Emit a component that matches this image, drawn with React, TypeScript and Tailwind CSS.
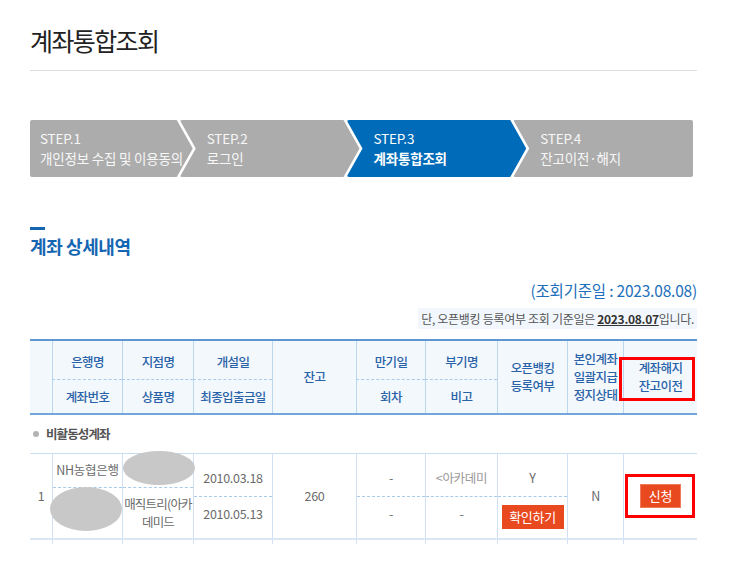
import React from 'react';

const FONT = "font-['Noto_Sans_CJK_KR','Noto_Sans',sans-serif]";

const steps = [
  { no: 'STEP.1', label: '개인정보 수집 및 이용동의', active: false },
  { no: 'STEP.2', label: '로그인', active: false },
  { no: 'STEP.3', label: '계좌통합조회', active: true },
  { no: 'STEP.4', label: '잔고이전·해지', active: false },
];

const clipFirst = '[clip-path:polygon(0_0,calc(100%_-_16px)_0,100%_50%,calc(100%_-_16px)_100%,0_100%)]';
const clipMiddle = '[clip-path:polygon(0_0,calc(100%_-_16px)_0,100%_50%,calc(100%_-_16px)_100%,0_100%,16px_50%)]';
const clipLast = '[clip-path:polygon(0_0,100%_0,100%_100%,0_100%,16px_50%)]';

const COLS = 'grid-cols-[22px_70px_71px_79px_84px_69px_72px_70px_56px_74px]';

// dotted separator between stacked values inside one cell
const DASH_TOP = 'border-t border-t-[#a9cbeb] [border-top-style:dashed]';

const Steps: React.FC = () => (
  <div className="flex h-[57px] w-[663px] mt-[49px]">
    {steps.map((s, i) => {
      const clip = i === 0 ? clipFirst : i === steps.length - 1 ? clipLast : clipMiddle;
      return (
        <div
          key={s.no}
          className={`flex-1 flex flex-col justify-center rounded-[2px] text-[13.5px] leading-[19.5px] tracking-[-0.2px] ${clip} ${
            i === 0 ? 'pl-[10px]' : '-ml-[13px] pl-[27px]'
          } ${s.active ? 'bg-[#006bb8] text-white' : 'bg-[#acacac] text-[#f7f7f7]'}`}
        >
          <div>{s.no}</div>
          <div className={s.active ? 'font-bold' : ''}>{s.label}</div>
        </div>
      );
    })}
  </div>
);

const HeadCell: React.FC<{ className: string; children: React.ReactNode }> = ({ className, children }) => (
  <div className={`flex flex-col items-center justify-center text-center leading-[18px] border-l border-l-[#bcd6ef] ${className}`}>
    {children}
  </div>
);

const TableHead: React.FC = () => (
  <div className="border-t-2 border-b-2 border-t-[#5f98d1] border-b-[#72a6da] bg-[#f3f8fd]">
    <div className={`grid ${COLS} grid-rows-[38px_34px] text-[12.5px] font-medium tracking-[-0.6px] text-[#2962a7]`}>
      <div className="col-start-1 row-start-1 row-span-2" />
      <HeadCell className="col-start-2 row-start-1 pt-[4px]">은행명</HeadCell>
      <HeadCell className={`col-start-2 row-start-2 ${DASH_TOP}`}>계좌번호</HeadCell>
      <HeadCell className="col-start-3 row-start-1 pt-[4px]">지점명</HeadCell>
      <HeadCell className={`col-start-3 row-start-2 ${DASH_TOP}`}>상품명</HeadCell>
      <HeadCell className="col-start-4 row-start-1 pt-[4px]">개설일</HeadCell>
      <HeadCell className={`col-start-4 row-start-2 ${DASH_TOP}`}>최종입출금일</HeadCell>
      <HeadCell className="col-start-5 row-start-1 row-span-2">잔고</HeadCell>
      <HeadCell className="col-start-6 row-start-1 pt-[4px]">만기일</HeadCell>
      <HeadCell className={`col-start-6 row-start-2 ${DASH_TOP}`}>회차</HeadCell>
      <HeadCell className="col-start-7 row-start-1 pt-[4px]">부기명</HeadCell>
      <HeadCell className={`col-start-7 row-start-2 ${DASH_TOP}`}>비고</HeadCell>
      <HeadCell className="col-start-8 row-start-1 row-span-2">
        <span>오픈뱅킹</span>
        <span>등록여부</span>
      </HeadCell>
      <HeadCell className="col-start-9 row-start-1 row-span-2">
        <span>본인계좌</span>
        <span>일괄지급</span>
        <span>정지상태</span>
      </HeadCell>
      <HeadCell className="col-start-10 row-start-1 row-span-2">
        <span>계좌해지</span>
        <span>잔고이전</span>
      </HeadCell>
    </div>
  </div>
);

const Split: React.FC<{ top: React.ReactNode; bottom: React.ReactNode }> = ({ top, bottom }) => (
  <div className="flex flex-col justify-center border-l border-[#cfe1f2]">
    <div className="h-[35px] flex items-center justify-center">{top}</div>
    <div className={`h-[35px] flex items-center justify-center ${DASH_TOP}`}>{bottom}</div>
  </div>
);

const DataRow: React.FC = () => (
  <div className="border-b-2 border-[#d9e7f4]">
    <div className={`grid ${COLS} h-[84px] text-[12.5px] tracking-[-0.3px] text-[#6b6b6b]`}>
      <div className="flex items-center justify-center">1</div>
      <div className="flex flex-col border-l border-[#cfe1f2]">
        <div className="h-[33px] flex items-center justify-center">NH농협은행</div>
        <div className={`flex-1 ${DASH_TOP}`} />
      </div>
      <div className="flex flex-col border-l border-[#cfe1f2]">
        <div className="h-[33px]" />
        <div className={`flex-1 flex flex-col items-center justify-center leading-[18px] whitespace-nowrap tracking-[-0.8px] ${DASH_TOP}`}>
          <span>매직트리(아카</span>
          <span>데미드</span>
        </div>
      </div>
      <Split top="2010.03.18" bottom="2010.05.13" />
      <div className="flex items-center justify-center border-l border-[#cfe1f2]">260</div>
      <Split top="-" bottom="-" />
      <Split top={<span className="text-[#999]">&lt;아카데미</span>} bottom="-" />
      <Split
        top="Y"
        bottom={
          <button className="mt-[5px] w-[62px] h-[24px] bg-[#e8491f] text-white text-[13px] leading-[24px]">확인하기</button>
        }
      />
      <div className="flex items-center justify-center border-l border-[#cfe1f2]">N</div>
      <div className="flex items-center justify-center border-l border-[#cfe1f2]">
        <button className="w-[41px] h-[24px] bg-[#e8491f] border border-[#f07a5a] text-white text-[13px] leading-[22px]">신청</button>
      </div>
    </div>
  </div>
);

const App: React.FC = () => {
  return (
    <div className={`w-[749px] h-[566px] overflow-hidden bg-white ${FONT}`}>
      <div className="ml-[30px] w-[667px] flex flex-col">
        {/* page title */}
        <div className="pt-[24px] pb-[13px] border-b border-[#dcdcdc]">
          <h1 className="text-[25px] leading-[33px] tracking-[-1.6px] text-[#222]">계좌통합조회</h1>
        </div>

        <Steps />

        {/* section heading */}
        <div className="mt-[50px] w-[15px] h-[3px] bg-[#1466b2]" />
        <h2 className="mt-[4px] text-[18px] leading-[24px] font-bold tracking-[-0.4px] text-[#1466b2]">계좌 상세내역</h2>

        <div className="mt-[22px] self-end text-[15.5px] leading-[20px] tracking-[-0.2px] text-[#1d6fbb]">
          (조회기준일 : 2023.08.08)
        </div>
        <div className="mt-[8px] self-end bg-[#f2f7fd] px-[3px] text-[12px] leading-[21px] tracking-[-0.3px] text-[#555]">
          단, 오픈뱅킹 등록여부 조회 기준일은 <span className="font-bold underline text-[#333]">2023.08.07</span>입니다.
        </div>

        {/* table */}
        <div className="relative mt-[10px]">
          <TableHead />
          <div className="h-[39px] flex items-center border-b border-[#c9ddf0] pl-[3px] text-[12.5px] tracking-[-0.9px] text-[#555] font-bold">
            <span className="w-[6px] h-[6px] rounded-full bg-[#b3b3b3] mr-[7px]" />
            비활동성계좌
          </div>
          <DataRow />
          <div className={`grid ${COLS} h-[4px]`}>
            <div />
            <div className="border-l border-[#cfe1f2]" />
            <div className="border-l border-[#cfe1f2]" />
            <div className="border-l border-[#cfe1f2]" />
            <div className="border-l border-[#cfe1f2]" />
            <div className="border-l border-[#cfe1f2]" />
            <div className="border-l border-[#cfe1f2]" />
            <div className="border-l border-[#cfe1f2]" />
            <div className="border-l border-[#cfe1f2]" />
            <div className="border-l border-[#cfe1f2]" />
          </div>

          {/* masked values */}
          <div className="absolute left-[93px] top-[112px] w-[72px] h-[34px] rounded-[50%] bg-[#c8c8c8]" />
          <div className="absolute left-[20px] top-[148px] w-[72px] h-[44px] rounded-[50%] bg-[#c8c8c8]" />

          {/* highlight boxes */}
          <div className="absolute left-[589px] top-[18px] w-[76px] h-[44px] border-[3px] border-[#ff0000]" />
          <div className="absolute left-[595px] top-[135px] w-[70px] h-[44px] border-[3px] border-[#ff0000]" />
        </div>
      </div>
    </div>
  );
};

export default App;
